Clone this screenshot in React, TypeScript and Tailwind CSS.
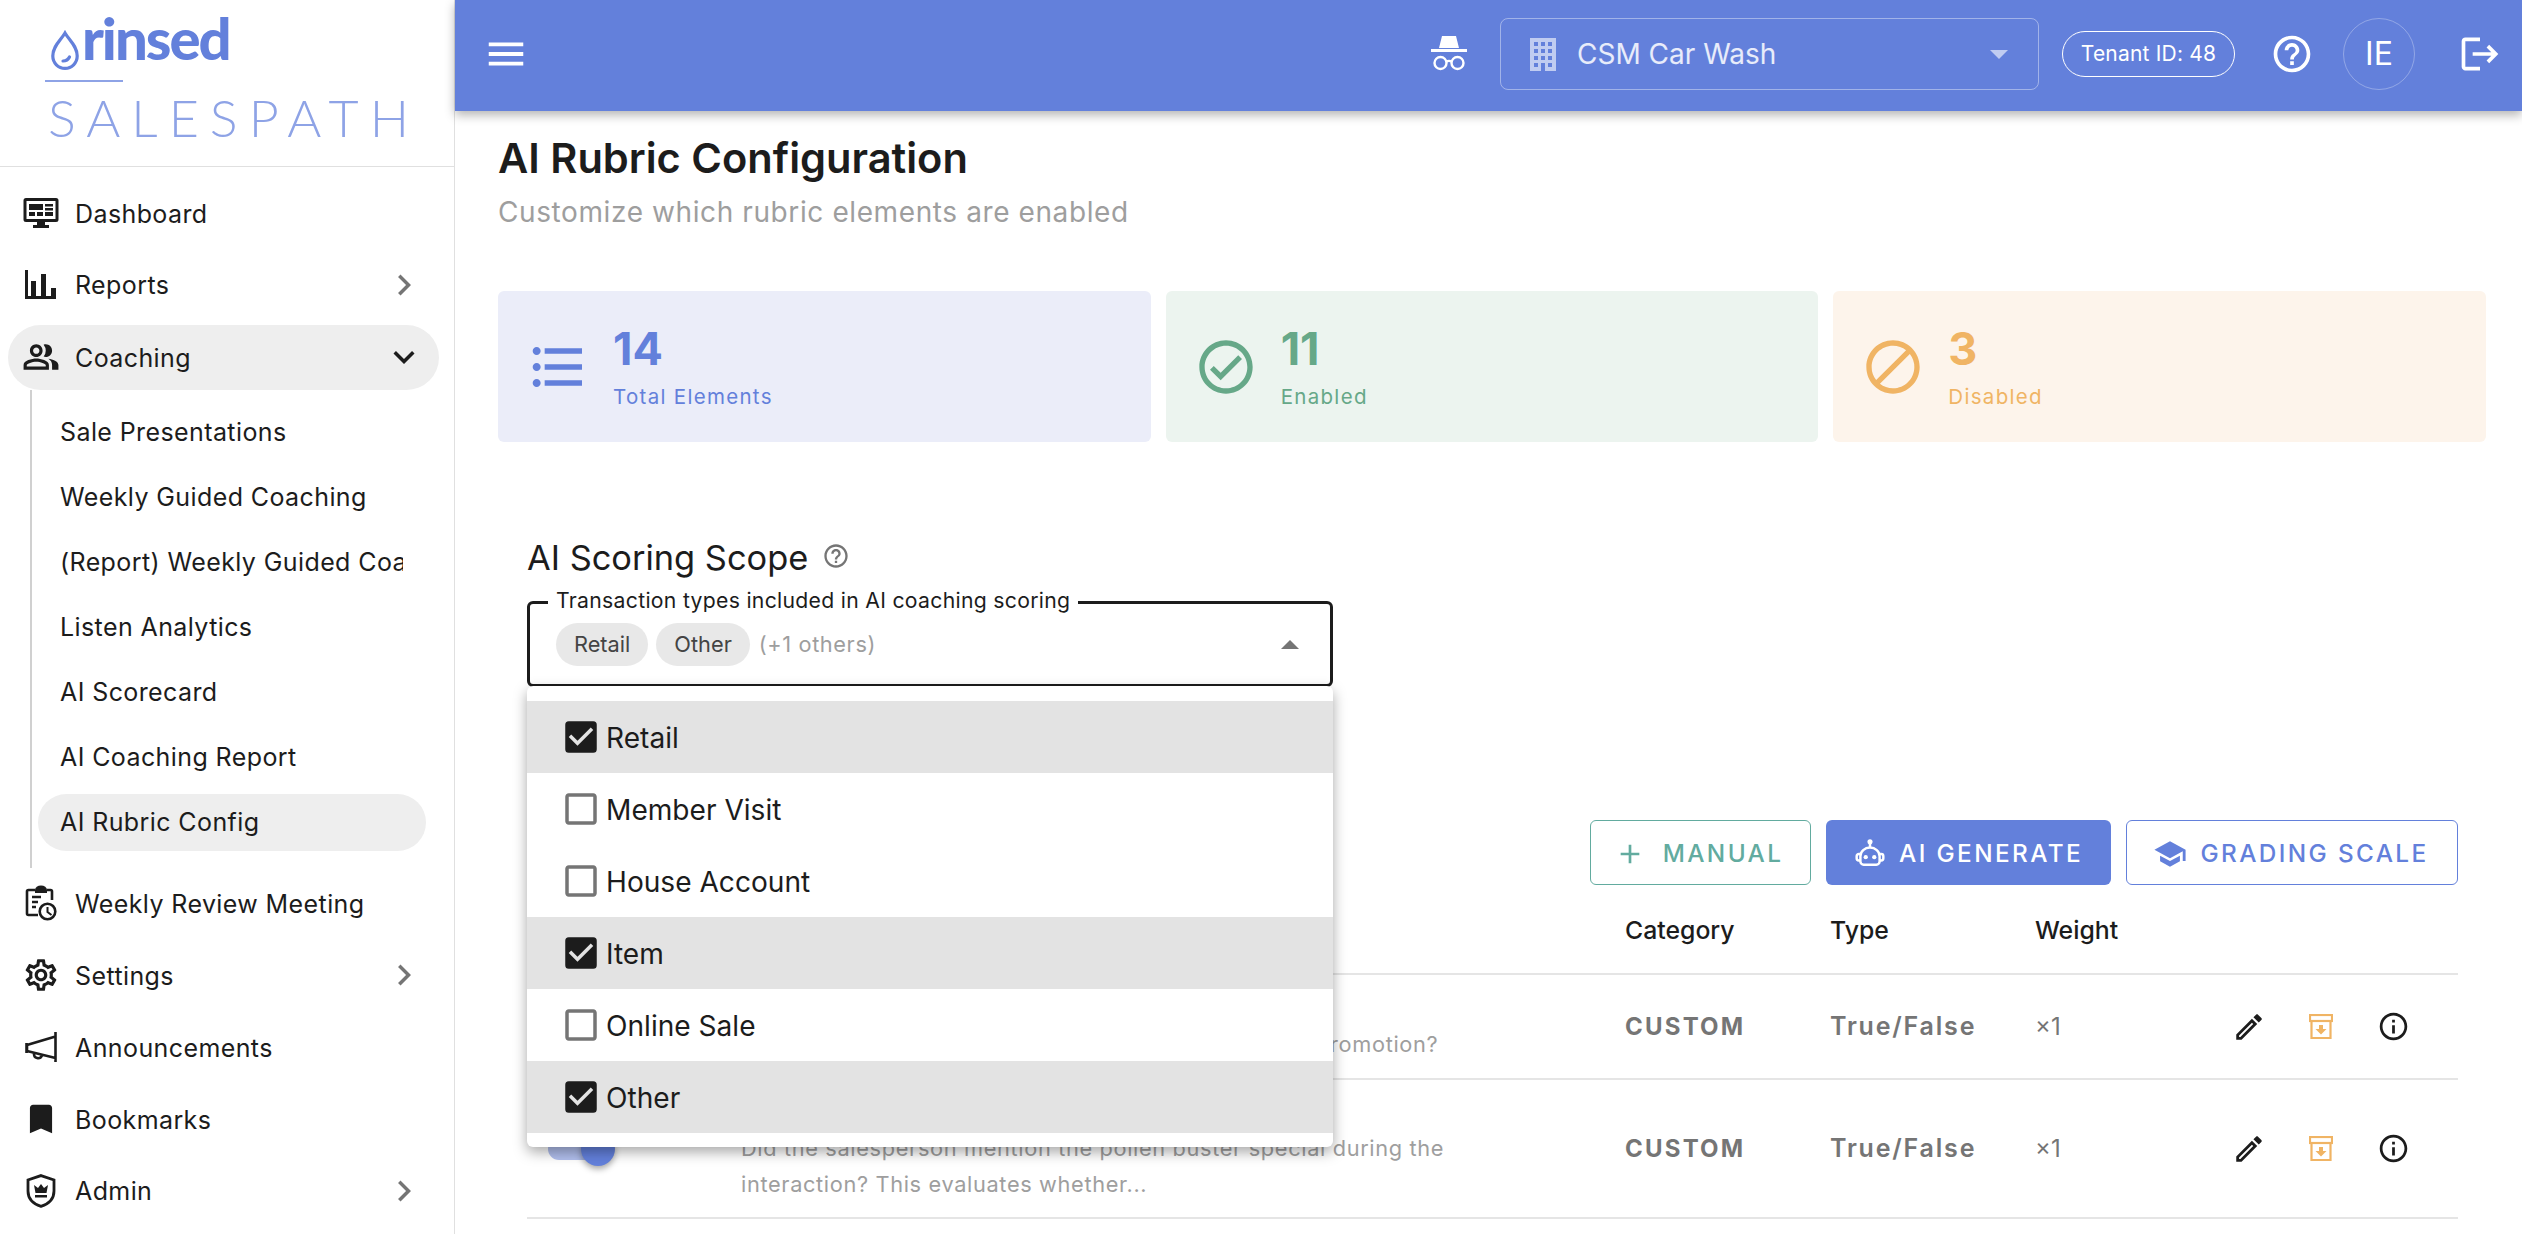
import type { ReactNode } from "react";
import {
  MdAdd,
  MdBlock,
  MdBookmark,
  MdCheckBox,
  MdCheckBoxOutlineBlank,
  MdChevronRight,
  MdExpandMore,
  MdFormatListBulleted,
  MdHelpOutline,
  MdInfoOutline,
  MdLogout,
  MdMenu,
  MdOutlineCheckCircle,
  MdOutlineEdit,
  MdOutlinePeopleAlt,
  MdOutlineSettings,
  MdSchool,
} from "react-icons/md";

const DashIcon = () => (
  <svg viewBox="0 0 36 32" className="h-[32px] w-[36px]" fill="#1c1c1c">
    <path d="M3 1h30a2.5 2.5 0 0 1 2.5 2.5v19a2.5 2.5 0 0 1-2.5 2.5H3a2.5 2.5 0 0 1-2.5-2.5v-19A2.5 2.5 0 0 1 3 1zm.5 3v18h29V4z" />
    <path d="M6 7h14v6H6zM22 7h8v2.5h-8zM22 11h8v2.5h-8zM22 15h8v4h-8zM6 15h6v4H6zM14 15h6v4h-6zM14 25h8v3h4v3H10v-3h4z" />
  </svg>
);

const ReportsIcon = () => (
  <svg viewBox="0 0 32 29" className="h-[29px] w-[32px]" fill="#1c1c1c">
    <path d="M0 0h3v29H0zM6 11h5v18H6zM16 4h5v25h-5zM26 18h5v11h-5zM0 26h31v3H0z" />
  </svg>
);

const ClipboardClockIcon = () => (
  <svg viewBox="0 0 32 36" className="h-[36px] w-[32px]" fill="none" stroke="#1c1c1c" strokeWidth="2.6">
    <path d="M10 5H3.500A1.500 1.500 0 0 0 2 6.500v22A1.500 1.500 0 0 0 3.500 30H13M22 5h3.500A1.500 1.500 0 0 1 27 6.500V15" />
    <path d="M10 8V5a6 4.500 0 0 1 12 0v3z" fill="#1c1c1c" stroke="none" />
    <path d="M7 12h9M7 17h6M7 22h4" />
    <circle cx="22.500" cy="26.500" r="7.800" />
    <path d="M22.500 22v5l4 3" strokeWidth="2" />
  </svg>
);

const MegaphoneIcon = () => (
  <svg viewBox="0 0 32 30" className="h-[30px] w-[32px]" fill="none" stroke="#1c1c1c" strokeWidth="2.6">
    <path d="M30.500 0v30M30.500 4.500 2 13v6l28.500 7M1.500 11v10" />
    <path d="M9 21.500c-.5 5 6 6.500 8 2" />
  </svg>
);

const ShieldCrownIcon = () => (
  <svg viewBox="0 0 30 34" className="h-[34px] w-[30px]" fill="none">
    <path d="M15 1.600 28 6v11c0 8-5.500 13-13 15.400C7.500 30 2 25 2 17V6z" stroke="#1c1c1c" strokeWidth="2.800" />
    <path d="M8 11l4 3 3-4 3 4 4-3-1.500 8h-11zM9 21h12v2.500H9z" fill="#1c1c1c" />
  </svg>
);

const SpyIcon = () => (
  <svg viewBox="0 0 38 36" className="h-[36px] w-[38px]" fill="none">
    <path d="M12 0h14l3 12H9zM1 13h36v3H1z" fill="#fff" />
    <circle cx="10.500" cy="27" r="6" stroke="#fff" strokeWidth="2.400" />
    <circle cx="27.500" cy="27" r="6" stroke="#fff" strokeWidth="2.400" />
    <path d="M16 26c2-1.500 4-1.500 6 0" stroke="#fff" strokeWidth="2.400" />
  </svg>
);

const BuildingIcon = () => (
  <svg viewBox="0 0 26 33" className="h-[33px] w-[26px]" fill="currentColor" fillRule="evenodd">
    <path d="M0 0h26v33H0zM4 4v4h4V4zm7 0v4h4V4zm7 0v4h4V4zM4 11v4h4v-4zm7 0v4h4v-4zm7 0v4h4v-4zM4 18v4h4v-4zm7 0v4h4v-4zm7 0v4h4v-4zM4 25v4h4v-4zm14 0v4h4v-4zm-7 0v8h4v-8z" />
  </svg>
);

const RobotIcon = () => (
  <svg viewBox="0 0 30 30" className="h-[32px] w-[32px]" fill="none" stroke="#fff" strokeWidth="2.300">
    <circle cx="15" cy="3.500" r="2.400" fill="#fff" stroke="none" />
    <path d="M15 5v4" />
    <path d="M6 17a9 8 0 0 1 18 0v5a3 3 0 0 1-3 3H9a3 3 0 0 1-3-3z" />
    <path d="M6 15H4.500a2 2 0 0 0-2 2v2a2 2 0 0 0 2 2H6M24 15h1.500a2 2 0 0 1 2 2v2a2 2 0 0 1-2 2H24" />
    <circle cx="11" cy="18" r="2" fill="#fff" stroke="none" />
    <circle cx="19" cy="18" r="2" fill="#fff" stroke="none" />
  </svg>
);

const ArchiveIcon = () => (
  <svg viewBox="0 0 24 25" className="h-[25px] w-[24px] text-[#f0b464]" fill="none" stroke="currentColor" strokeWidth="2.200">
    <rect x="1" y="1" width="22" height="6" />
    <path d="M2.500 7v17h19V7" />
    <path d="M10 11h4v4h3.500L12 20.500 6.500 15H10z" fill="currentColor" stroke="none" />
  </svg>
);

const DropIcon = () => (
  <svg viewBox="0 0 28 40" className="h-[40px] w-[28px]" fill="none" stroke="#6380db" strokeWidth="3.200">
    <path d="M14 3C10 10 1.800 16 1.800 26a12.200 12.400 0 0 0 24.400 0C26.200 16 18 10 14 3z" />
    <path d="M12 31c3 0 5-1 6.500-4" strokeLinecap="round" />
  </svg>
);

const navTop = [
  { label: "Dashboard", icon: <DashIcon /> },
  { label: "Reports", icon: <ReportsIcon />, arrow: true },
];

const subItems = [
  "Sale Presentations",
  "Weekly Guided Coaching",
  "(Report) Weekly Guided Coaching",
  "Listen Analytics",
  "AI Scorecard",
  "AI Coaching Report",
  "AI Rubric Config",
];

const navBottom = [
  { label: "Weekly Review Meeting", icon: <ClipboardClockIcon /> },
  { label: "Settings", icon: <MdOutlineSettings size={38} />, arrow: true },
  { label: "Announcements", icon: <MegaphoneIcon /> },
  { label: "Bookmarks", icon: <MdBookmark size={42} /> },
  { label: "Admin", icon: <ShieldCrownIcon />, arrow: true },
];

const options = [
  { label: "Retail", on: true },
  { label: "Member Visit", on: false },
  { label: "House Account", on: false },
  { label: "Item", on: true },
  { label: "Online Sale", on: false },
  { label: "Other", on: true },
];

const tableCols = "grid-cols-[214px_884px_205px_205px_178px_245px]";

function NavRow({ icon, label, arrow }: { icon: ReactNode; label: string; arrow?: boolean }) {
  return (
    <div className="flex h-[71.800px] items-center pr-[29px] pl-[22px]">
      <div className="flex w-[38px] justify-center">{icon}</div>
      <span className="mt-[3px] ml-[15px] flex-1 text-[25px] tracking-[0.4px]">{label}</span>
      {arrow && <MdChevronRight size={42} className="text-[#757575]" />}
    </div>
  );
}

function Sidebar() {
  return (
    <aside className="flex h-full w-[455px] shrink-0 flex-col border-r border-[#e0e0e0] text-[#1c1c1c]">
      <div className="h-[167px] shrink-0 border-b border-[#e0e0e0] pl-[45px]">
        <div className="flex h-[70px] items-end pl-[6px]">
          <DropIcon />
          <span className="ml-[3px] font-['Lato'] text-[58px] leading-[64px] font-black tracking-[-2px] text-[#6380db]">rinsed</span>
        </div>
        <div className="mt-[10px] h-[2px] w-[78px] bg-[#8ea3e6]" />
        <div className="mt-[5px] ml-[3px] font-['Lato'] text-[52px] leading-[60px] font-light tracking-[11px] whitespace-nowrap text-[#8ea3e6]">
          SALESPATH
        </div>
      </div>
      <nav className="pt-[10px]">
        {navTop.map((n) => (
          <NavRow key={n.label} {...n} />
        ))}
        <div className="mx-[8px] my-[4px] flex h-[65px] w-[431px] items-center rounded-full bg-[#eeeeee] pr-[14px] pl-[14px]">
          <div className="flex w-[38px] justify-center">
            <MdOutlinePeopleAlt size={38} />
          </div>
          <span className="mt-[3px] ml-[15px] flex-1 text-[25px] tracking-[0.4px]">Coaching</span>
          <MdExpandMore size={42} />
        </div>
        <div className="ml-[30px] -mt-[4px] border-l-2 border-[#d0d0d0] pt-[10px] pb-[13px]">
          {subItems.map((s) => (
            <div key={s} className="flex h-[65px] items-center pr-[28px] pl-[6px]">
              <div
                className={`flex h-[57px] flex-1 items-center rounded-full pl-[22px] ${
                  s === "AI Rubric Config" ? "bg-[#eeeeee]" : ""
                }`}
              >
                <span className="mt-[1px] w-[343px] overflow-hidden text-[25px] tracking-[0.4px] whitespace-nowrap">{s}</span>
              </div>
            </div>
          ))}
        </div>
        {navBottom.map((n) => (
          <NavRow key={n.label} {...n} />
        ))}
      </nav>
    </aside>
  );
}

function Header() {
  return (
    <header className="relative z-10 flex h-[111px] shrink-0 items-center bg-[#6380db] pr-[20px] pb-[3px] pl-[28px] text-white shadow-[0_4px_10px_rgba(0,0,0,0.3)]">
      <MdMenu size={46} />
      <div className="ml-auto">
        <SpyIcon />
      </div>
      <div className="ml-[32px] flex h-[72px] w-[539px] items-center rounded-[8px] border border-white/40 pr-[30px] pl-[29px] text-white/60">
        <BuildingIcon />
        <span className="ml-[21px] flex-1 text-[28px] text-white/85">CSM Car Wash</span>
        <div className="h-0 w-0 border-x-[9px] border-t-[9px] border-x-transparent border-t-white/60" />
      </div>
      <div className="ml-[23px] flex h-[46px] w-[173px] items-center justify-center rounded-full border border-white text-[21px] tracking-[0.2px]">
        Tenant ID: 48
      </div>
      <MdHelpOutline size={44} className="ml-[35px]" />
      <div className="ml-[29px] flex h-[72px] w-[72px] items-center justify-center rounded-full border border-white/30 text-[32px]">
        IE
      </div>
      <MdLogout size={44} className="ml-[43px]" />
    </header>
  );
}

function StatCard({ icon, n, label, cls }: { icon: ReactNode; n: string; label: string; cls: string }) {
  return (
    <div className={`flex h-[151px] flex-1 items-center rounded-[6px] pl-[28px] ${cls}`}>
      <div className="flex w-[64px] justify-center">{icon}</div>
      <div className="ml-[23px] pb-[1px]">
        <div className="text-[45px] leading-[54px] font-bold">{n}</div>
        <div className="mt-[7px] text-[20.500px] leading-[28px] tracking-[1.300px]">{label}</div>
      </div>
    </div>
  );
}

function Toggle() {
  return (
    <div className="relative ml-[21px] h-[22px] w-[54px] rounded-full bg-[#b1bfed]">
      <div className="absolute top-[-6px] left-[33px] h-[34px] w-[34px] rounded-full bg-[#6380db] shadow-[0_3px_6px_rgba(0,0,0,0.35)]" />
    </div>
  );
}

function Row({ title, desc, cls }: { title: string; desc: string; cls: string }) {
  return (
    <div className={`grid ${tableCols} items-center border-b-2 border-[#e5e5e5] ${cls}`}>
      <Toggle />
      <div className="pr-[170px]">
        <div className="text-[24px] leading-[36px] font-medium text-[#1c1c1c]">{title}</div>
        <div className="text-[21.760px] leading-[35.500px] tracking-[0.65px] text-[#9e9e9e]">{desc}</div>
      </div>
      <div className="text-[24px] font-bold tracking-[2.200px] text-[#757575]">CUSTOM</div>
      <div className="text-[25px] font-semibold tracking-[1.800px] text-[#757575]">True/False</div>
      <div className="text-[24px] text-[#757575]">×1</div>
      <div className="flex items-center text-[#1c1c1c]">
        <div className="flex w-[72px] justify-center">
          <MdOutlineEdit size={34} />
        </div>
        <div className="flex w-[72px] justify-center">
          <ArchiveIcon />
        </div>
        <div className="flex w-[72px] justify-center">
          <MdInfoOutline size={33} />
        </div>
      </div>
    </div>
  );
}

function Dropdown() {
  return (
    <div className="absolute top-[85px] left-0 z-20 w-[806px] rounded-[6px] bg-white py-[14.500px] shadow-[0_5px_14px_rgba(0,0,0,0.35)]">
      {options.map((o) => (
        <div key={o.label} className={`flex h-[72px] items-center pl-[33px] ${o.on ? "bg-[#e3e3e3]" : ""}`}>
          {o.on ? (
            <MdCheckBox size={42} className="text-[#1c1c1c]" />
          ) : (
            <MdCheckBoxOutlineBlank size={42} className="text-[#757575]" />
          )}
          <span className="mt-[3px] ml-[4px] text-[28.100px] text-[#1c1c1c]">{o.label}</span>
        </div>
      ))}
    </div>
  );
}

export default function App() {
  return (
    <div className="flex h-[1234px] w-[2522px] overflow-hidden bg-white font-['Inter',sans-serif]">
      <Sidebar />
      <main className="flex min-w-0 flex-1 flex-col">
        <Header />
        <div className="flex-1 overflow-hidden pt-[23px] pr-[36px] pl-[43px]">
          <h1 className="text-[41.600px] leading-[48px] font-semibold text-[#1c1c1c]">AI Rubric Configuration</h1>
          <p className="mt-[12px] text-[28px] leading-[36px] tracking-[0.6px] text-[#9e9e9e]">
            Customize which rubric elements are enabled
          </p>
          <div className="mt-[61px] flex gap-[15px]">
            <StatCard
              icon={<MdFormatListBulleted size={64} />}
              n="14"
              label="Total Elements"
              cls="bg-[#ebedf9] text-[#6380db]"
            />
            <StatCard
              icon={<MdOutlineCheckCircle size={64} />}
              n="11"
              label="Enabled"
              cls="bg-[#ecf4ef] text-[#66a888]"
            />
            <StatCard icon={<MdBlock size={64} />} n="3" label="Disabled" cls="bg-[#fdf4eb] text-[#f0b464]" />
          </div>
          <section className="pt-[93px] pr-[28px] pl-[29px]">
            <div className="flex h-[46px] items-center text-[34.400px] text-[#1c1c1c]">
              AI Scoring Scope
              <MdHelpOutline size={28} className="mb-[4px] ml-[14px] text-[#757575]" />
            </div>
            <div className="relative mt-[20px] w-[806px]">
              <div className="flex h-[86px] items-center rounded-[6px] border-[3px] border-[#1c1c1c] pr-[31px] pl-[26px]">
                <span className="flex h-[43px] items-center rounded-full bg-[#e8e8e8] px-[18px] text-[21.760px] text-[#444]">
                  Retail
                </span>
                <span className="ml-[8px] flex h-[43px] items-center rounded-full bg-[#e8e8e8] px-[18px] text-[21.760px] text-[#444]">
                  Other
                </span>
                <span className="ml-[9px] flex-1 text-[21.760px] tracking-[0.6px] text-[#9e9e9e]">(+1 others)</span>
                <div className="h-0 w-0 border-x-[9px] border-b-[9px] border-x-transparent border-b-[#757575]" />
              </div>
              <span className="absolute top-[-15px] left-[21px] bg-white px-[8px] text-[21.200px] leading-[28px] tracking-[0.3px] text-[#1c1c1c]">
                Transaction types included in AI coaching scoring
              </span>
              <Dropdown />
            </div>
            <div className="mt-[133px] flex justify-end gap-[15px]">
              <button className="flex h-[65px] w-[221px] items-center justify-center rounded-[6px] border border-[#62ab9f] pt-[2px] pr-[4px] text-[24.300px] font-medium tracking-[2.400px] text-[#62ab9f]">
                <MdAdd size={32} className="mr-[17px]" />
                MANUAL
              </button>
              <button className="flex h-[65px] w-[285px] items-center justify-center rounded-[6px] bg-[#6380db] pt-[2px] text-[24.300px] font-medium tracking-[2.400px] text-white">
                <RobotIcon />
                <span className="ml-[13px]">AI GENERATE</span>
              </button>
              <button className="flex h-[65px] w-[332px] items-center justify-center rounded-[6px] border border-[#6380db] pt-[2px] pr-[2px] text-[24.300px] font-medium tracking-[2.400px] text-[#6380db]">
                <MdSchool size={34} className="mr-[13px]" />
                GRADING SCALE
              </button>
            </div>
            <div className={`grid h-[90px] ${tableCols} items-center border-b-2 border-[#e5e5e5] pt-[3px] text-[24.800px] font-medium text-[#1c1c1c]`}>
              <div>Enabled</div>
              <div>Element</div>
              <div>Category</div>
              <div>Type</div>
              <div>Weight</div>
              <div />
            </div>
            <Row
              cls="h-[105px]"
              title="Current Promotion"
              desc="Did the salesperson tell the guest about the monthly promotion?"
            />
            <Row
              cls="h-[139px]"
              title="Pollen Buster Special"
              desc="Did the salesperson mention the pollen buster special during the interaction? This evaluates whether..."
            />
          </section>
        </div>
      </main>
    </div>
  );
}
